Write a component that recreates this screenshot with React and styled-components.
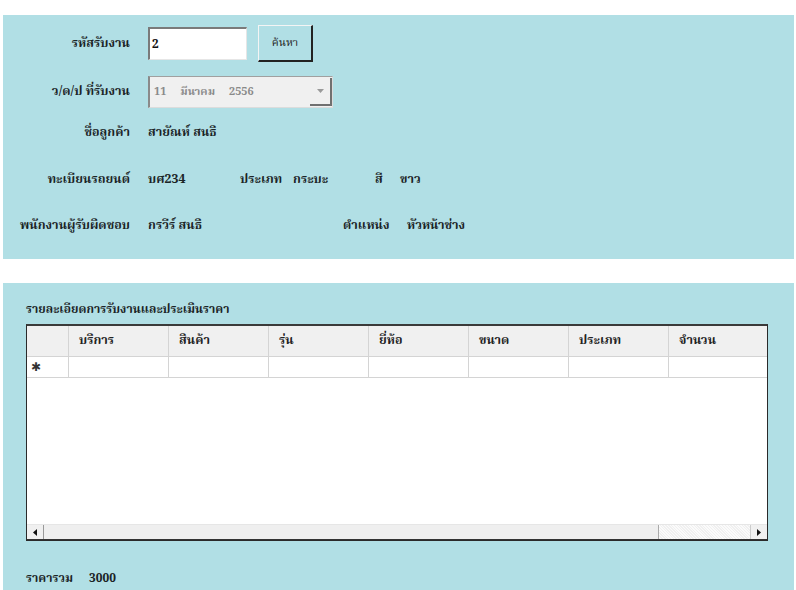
import React from "react";
import styled, { createGlobalStyle } from "styled-components";

const Global = createGlobalStyle`
  html, body {
    margin: 0;
    padding: 0;
    background: #ffffff;
  }
  body {
    font-family: "Noto Serif Thai", Norasi, Loma, Garuda, "Noto Sans Thai", Tahoma, "Noto Sans", "DejaVu Sans", sans-serif;
    color: #1b2426;
  }
`;

const Page = styled.div`
  width: 796px;
  height: 590px;
  overflow: hidden;
  padding: 15px 2px 0 3px;
  box-sizing: border-box;
`;

const Panel = styled.div`
  background: #b1dfe5;
  height: ${(p) => p.$h}px;
  margin-bottom: ${(p) => p.$mb || 0}px;
  box-sizing: border-box;
  padding: ${(p) => p.$pad};
  display: flex;
  flex-direction: column;
`;

const Row = styled.div`
  display: flex;
  align-items: center;
  height: ${(p) => p.$h}px;
  margin-top: ${(p) => p.$mt || 0}px;
`;

const Label = styled.div`
  width: 127px;
  text-align: right;
  font-size: 12.5px;
  font-weight: bold;
  margin-right: 18px;
  white-space: nowrap;
`;

const Cell = styled.div`
  width: ${(p) => (p.$w ? `${p.$w}px` : "auto")};
  flex: none;
  font-size: 12.5px;
  font-weight: bold;
  white-space: nowrap;
`;

const TextBox = styled.div`
  width: 99px;
  height: 33px;
  box-sizing: border-box;
  background: #fff;
  border-top: 2px solid #7a7a7a;
  border-left: 2px solid #7a7a7a;
  border-right: 1px solid #e6e6e6;
  border-bottom: 1px solid #e6e6e6;
  font-size: 12px;
  font-weight: bold;
  padding: 6px 2px;
  color: #111;
`;

const Button = styled.div`
  width: 55px;
  height: 37px;
  margin-left: 11px;
  box-sizing: border-box;
  display: flex;
  align-items: center;
  justify-content: center;
  font-size: 11px;
  color: #222;
  background: #b1dfe5;
  border-top: 1px solid #f4f4f4;
  border-left: 1px solid #f4f4f4;
  border-right: 2px solid #222;
  border-bottom: 2px solid #222;
`;

const Combo = styled.div`
  width: 185px;
  height: 32px;
  box-sizing: border-box;
  background: #f0f0f0;
  border-top: 1px solid #a0a0a0;
  border-left: 2px solid #8a8a8a;
  border-right: 1px solid #dcdcdc;
  border-bottom: 1px solid #dcdcdc;
  display: flex;
  align-items: center;
  font-size: 11px;
  color: #8a8a8a;
  font-weight: bold;
`;

const ComboText = styled.div`
  flex: 1;
  padding-left: 4px;
  display: flex;
  gap: 14px;
  white-space: nowrap;
`;

const ComboBtn = styled.div`
  width: 22px;
  height: 28px;
  display: flex;
  align-items: center;
  justify-content: center;
  border-right: 2px solid #707070;
  border-bottom: 2px solid #707070;
  box-sizing: border-box;
`;

const Title = styled.div`
  font-size: 12px;
  font-weight: bold;
  height: 16px;
  line-height: 16px;
`;

const Grid = styled.div`
  margin-top: 6px;
  width: 742px;
  height: 217px;
  box-sizing: border-box;
  border: 1px solid #2a2a2a;
  border-top: 2px solid #3a3a3a;
  background: #fff;
  display: flex;
  flex-direction: column;
`;

const GridRow = styled.div`
  display: grid;
  grid-template-columns: 42px repeat(7, 100px);
  height: ${(p) => p.$h}px;
  background: ${(p) => (p.$head ? "#f0f0f0" : "#fff")};
  border-bottom: 1px solid #d4d4d4;
  box-sizing: border-box;
`;

const GridCell = styled.div`
  border-right: 1px solid #d4d4d4;
  display: flex;
  align-items: center;
  padding-left: ${(p) => p.$pl || 10}px;
  font-size: 12.5px;
  font-weight: ${(p) => (p.$head ? "bold" : "normal")};
  color: #222;
  &:last-child {
    border-right: none;
  }
`;

const Star = styled.span`
  font-family: "DejaVu Sans", sans-serif;
  font-size: 12px;
  color: #333;
`;

const Empty = styled.div`
  flex: 1;
`;

const HScroll = styled.div`
  height: 16px;
  display: flex;
  border-top: 1px solid #e6e6e6;
  border-bottom: 1px solid #333;
  box-sizing: border-box;
`;

const Arrow = styled.div`
  width: 17px;
  display: flex;
  align-items: center;
  justify-content: center;
  background: #f0f0f0;
  border-right: ${(p) => (p.$left ? "1px solid #999" : "none")};
  border-left: ${(p) => (p.$left ? "none" : "1px solid #ccc")};
  box-sizing: border-box;
`;

const Thumb = styled.div`
  width: 615px;
  background: #efefef;
  border-right: 1px solid #aaa;
  box-sizing: border-box;
`;

const Track = styled.div`
  flex: 1;
  background-color: #fbfbfb;
  background-image: repeating-linear-gradient(45deg, #f0f0f0 0 1px, transparent 1px 2px);
`;

const Total = styled.div`
  margin-top: 28px;
  display: flex;
  gap: 16px;
  font-size: 12px;
  font-weight: bold;
`;

const cols = ["บริการ", "สินค้า", "รุ่น", "ยี่ห้อ", "ขนาด", "ประเภท", "จำนวน"];

const App = () => {
  return (
    <Page>
      <Global />
      <Panel $h={244} $mb={24} $pad="10px 0 0 0">
        <Row $h={37}>
          <Label>รหัสรับงาน</Label>
          <TextBox>2</TextBox>
          <Button>ค้นหา</Button>
        </Row>
        <Row $h={32} $mt={14}>
          <Label>ว/ด/ป ที่รับงาน</Label>
          <Combo>
            <ComboText>
              <span>11</span>
              <span>มีนาคม</span>
              <span>2556</span>
            </ComboText>
            <ComboBtn>
              <svg width="7" height="4" viewBox="0 0 7 4">
                <path d="M0 0 L7 0 L3.5 4 Z" fill="#9a9a9a" />
              </svg>
            </ComboBtn>
          </Combo>
        </Row>
        <Row $h={26} $mt={12}>
          <Label>ชื่อลูกค้า</Label>
          <Cell>สายัณห์ สนธิ</Cell>
        </Row>
        <Row $h={26} $mt={21}>
          <Label>ทะเบียนรถยนต์</Label>
          <Cell $w={92}>บศ234</Cell>
          <Cell $w={53}>ประเภท</Cell>
          <Cell $w={82}>กระบะ</Cell>
          <Cell $w={25}>สี</Cell>
          <Cell>ขาว</Cell>
        </Row>
        <Row $h={26} $mt={20}>
          <Label>พนักงานผู้รับผิดชอบ</Label>
          <Cell $w={195}>กรวีร์ สนธิ</Cell>
          <Cell $w={64}>ตำแหน่ง</Cell>
          <Cell>หัวหน้าช่าง</Cell>
        </Row>
      </Panel>

      <Panel $h={320} $pad="19px 0 0 23px">
        <Title>รายละเอียดการรับงานและประเมินราคา</Title>
        <Grid>
          <GridRow $head $h={31}>
            <GridCell />
            {cols.map((c) => (
              <GridCell key={c} $head>
                {c}
              </GridCell>
            ))}
          </GridRow>
          <GridRow $h={21}>
            <GridCell $pl={4}>
              <Star>✱</Star>
            </GridCell>
            {cols.map((c) => (
              <GridCell key={c} />
            ))}
          </GridRow>
          <Empty />
          <HScroll>
            <Arrow $left>
              <svg width="4" height="7" viewBox="0 0 4 7">
                <path d="M4 0 L0 3.5 L4 7 Z" fill="#111" />
              </svg>
            </Arrow>
            <Thumb />
            <Track />
            <Arrow>
              <svg width="4" height="7" viewBox="0 0 4 7">
                <path d="M0 0 L4 3.5 L0 7 Z" fill="#111" />
              </svg>
            </Arrow>
          </HScroll>
        </Grid>
        <Total>
          <span>ราคารวม</span>
          <span>3000</span>
        </Total>
      </Panel>
    </Page>
  );
};

export default App;
